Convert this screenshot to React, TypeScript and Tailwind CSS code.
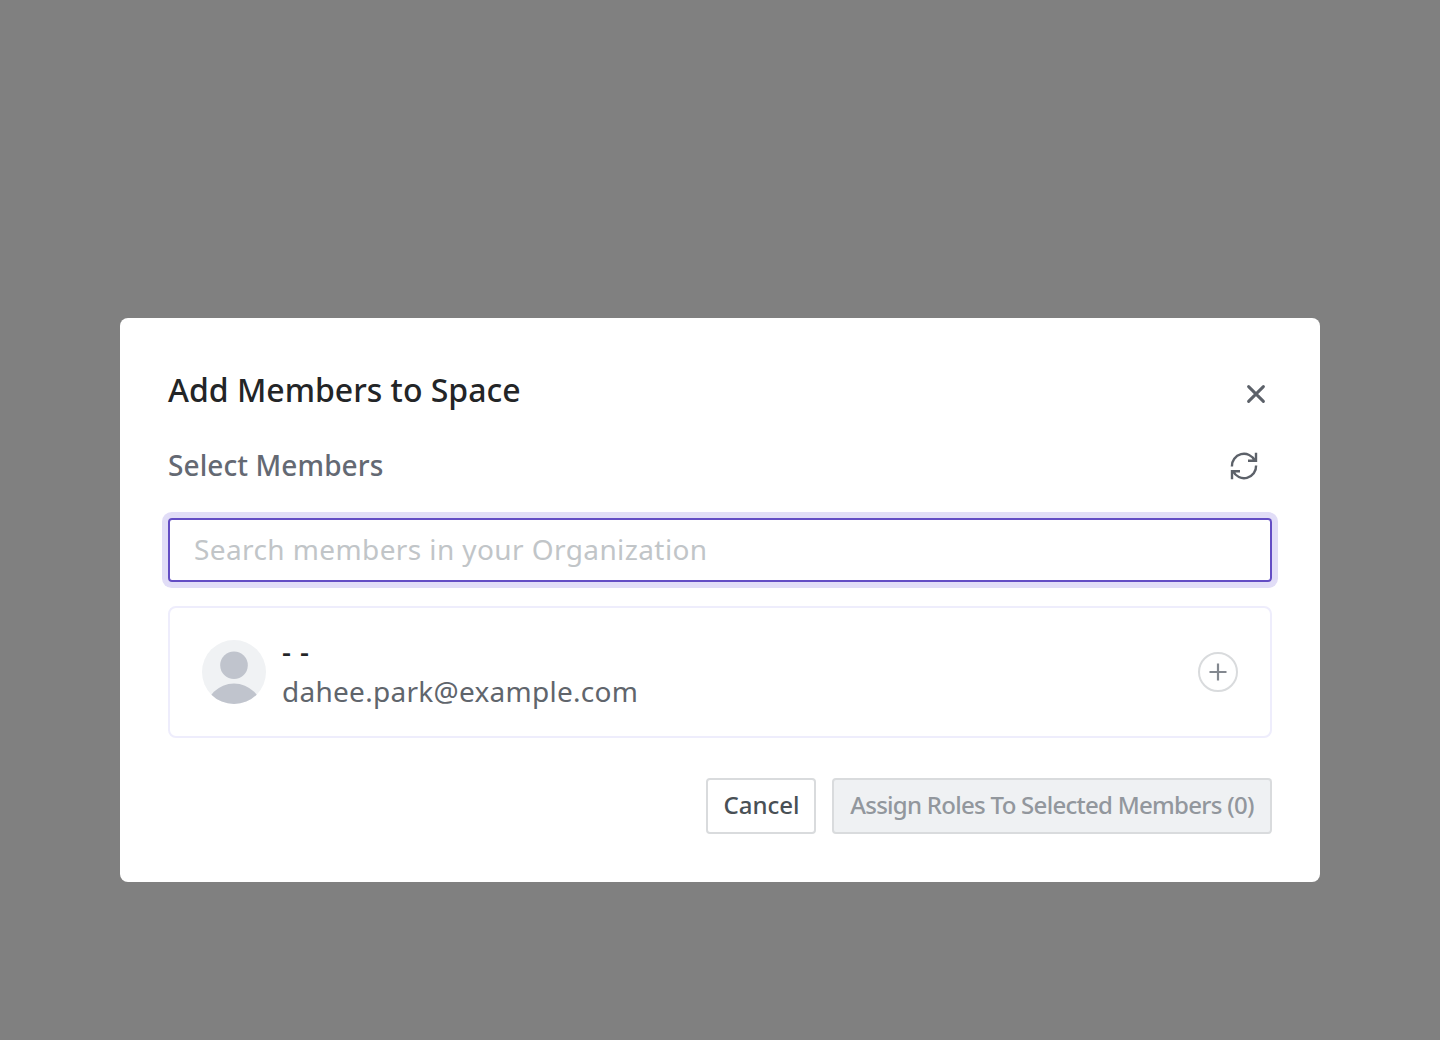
export default function App() {
  return (
    <div className="flex h-[1040px] w-full justify-center bg-[#808080] pt-[318px] font-['Noto_Sans',sans-serif]">
      <section className="flex h-[564px] w-[1200px] flex-col rounded-lg bg-white px-12 pt-12">
        <header className="flex h-[50px] items-center justify-between">
          <h1 className="pb-0.5 text-[32px] leading-[48px] font-medium text-[#232527]">Add Members to Space</h1>
          <button className="mt-1.5 flex w-8 items-center justify-center text-[#5c6169]" aria-label="Close">
            <svg width="20" height="20" viewBox="0 0 20 20" fill="none" stroke="currentColor" strokeWidth="3" strokeLinecap="round">
              <path d="M2.600 2.600l14.800 14.800M17.400 2.600l-14.800 14.800" />
            </svg>
          </button>
        </header>
        <div className="mt-[30px] flex h-10 items-center justify-between pr-3">
          <h2 className="pb-0.5 text-[28px] font-medium tracking-[0.1px] text-[#646973]">Select Members</h2>
          <svg className="text-[#5c6169]" width="32" height="32" viewBox="0 0 32 32" fill="none" stroke="currentColor" strokeWidth="2.4">
            <path d="M3.900 16.500A12.100 12.100 0 0 1 26.900 10.700M28 2.800v8h-8M28.100 15.500A12.100 12.100 0 0 1 5.100 21.300M4 29.200v-8h8" />
          </svg>
        </div>
        <input className="mt-8 h-16 shrink-0 rounded-[4px] border-2 border-[#634dc4] px-6 pb-0.5 text-[28px] tracking-[0.4px] ring-6 ring-[#e1ddf7] outline-none placeholder:text-[#c1c5c8]" placeholder="Search members in your Organization" />
        <div className="mt-6 flex h-[132px] items-center rounded-lg border-2 border-[#eeedfc] px-8">
          <svg width="64" height="64" viewBox="0 0 64 64">
            <clipPath id="avatar"><circle cx="32" cy="32" r="32" /></clipPath>
            <g clipPath="url(#avatar)">
              <path fill="#f0f2f4" d="M0 0h64v64H0z" />
              <circle cx="32" cy="25.300" r="13.800" fill="#c0c4cd" />
              <circle cx="32" cy="72" r="28.500" fill="#c0c4cd" />
            </g>
          </svg>
          <div className="ml-4 flex-1 pb-0.5 text-[28px] leading-10">
            <p className="font-medium tracking-[0.9px] text-[#232527]">- -</p>
            <p className="tracking-[0.27px] text-[#60656c]">dahee.park@example.com</p>
          </div>
          <button className="flex size-10 items-center justify-center rounded-full border-2 border-[#d9dbdd] text-[#83888f]" aria-label="Add">
            <svg width="18" height="18" viewBox="0 0 18 18" stroke="currentColor" strokeWidth="2.2"><path d="M9 0.500v17M0.500 9h17" /></svg>
          </button>
        </div>
        <footer className="mt-10 flex h-14 justify-end gap-4 text-2xl font-medium">
          <button className="w-[110px] rounded-[4px] border-2 border-[#d9dbdd] pb-0.5 pl-px text-[#495055]">Cancel</button>
          <button className="w-[440px] rounded-[4px] border-2 border-[#d9dbdd] bg-[#eff1f3] pb-0.5 tracking-[-0.72px] whitespace-nowrap text-[#92979d]">Assign Roles To Selected Members (0)</button>
        </footer>
      </section>
    </div>
  );
}
